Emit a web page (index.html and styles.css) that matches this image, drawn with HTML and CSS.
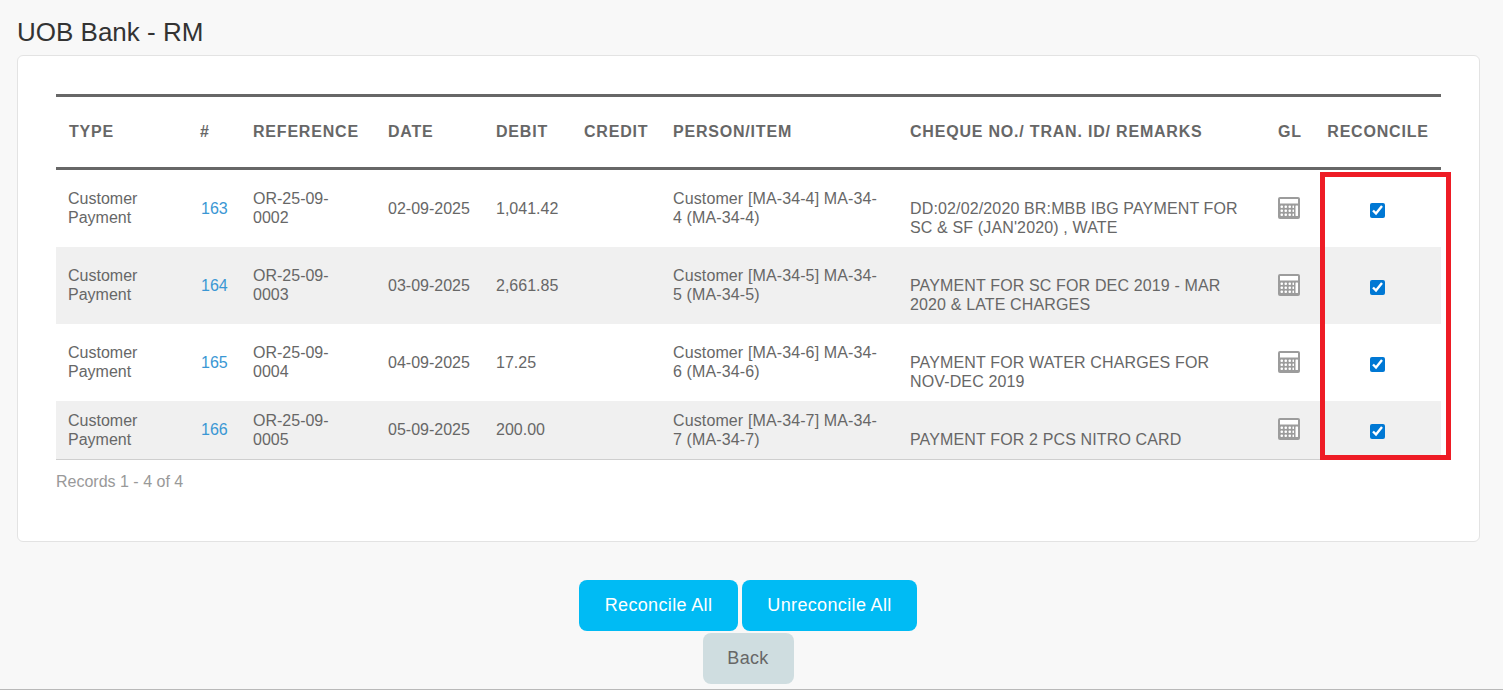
FILE: index.html
```html
<!DOCTYPE html>
<html lang="en">
<head>
<meta charset="utf-8">
<title>UOB Bank - RM</title>
<link rel="stylesheet" href="styles.css">
</head>
<body>
<svg class="sprite" width="0" height="0" aria-hidden="true">
  <symbol id="calc" viewBox="0 0 22 22">
    <rect x="0" y="0" width="22" height="22" rx="2" fill="#9c9c9c"/>
    <rect x="2" y="2" width="18" height="4.5" fill="#fff"/>
    <g fill="#fff">
      <rect x="2.5" y="8.5" width="2.5" height="2.5" rx="1"/><rect x="6.5" y="8.5" width="2.5" height="2.5" rx="1"/><rect x="10.5" y="8.5" width="2.5" height="2.5" rx="1"/><rect x="14.5" y="8.5" width="1.5" height="2.5" rx="0.5"/>
      <rect x="2.5" y="12.5" width="2.5" height="2.5" rx="1"/><rect x="6.5" y="12.5" width="2.5" height="2.5" rx="1"/><rect x="10.5" y="12.5" width="2.5" height="2.5" rx="1"/><rect x="14.5" y="12.5" width="1.5" height="2.5" rx="0.5"/>
      <rect x="2.5" y="16.5" width="2.5" height="2.5" rx="1"/><rect x="6.5" y="16.5" width="2.5" height="2.5" rx="1"/><rect x="10.5" y="16.5" width="2.5" height="2.5" rx="1"/><rect x="14.5" y="16.5" width="1.5" height="2.5" rx="0.5"/>
      <rect x="17.5" y="8.5" width="2.5" height="10.5" rx="0.5"/>
    </g>
  </symbol>
</svg>
<main class="page">
  <h1 class="title">UOB Bank - RM</h1>
  <section class="card">
    <div class="table-wrap">
      <table class="grid">
        <colgroup>
          <col class="c-type"><col class="c-num"><col class="c-ref"><col class="c-date"><col class="c-debit"><col class="c-credit"><col class="c-person"><col class="c-cheque"><col class="c-gl"><col class="c-rec">
        </colgroup>
        <thead>
          <tr><th class="first">TYPE</th><th>#</th><th>REFERENCE</th><th>DATE</th><th>DEBIT</th><th>CREDIT</th><th>PERSON/ITEM</th><th>CHEQUE NO./ TRAN. ID/ REMARKS</th><th>GL</th><th class="center">RECONCILE</th></tr>
        </thead>
        <tbody>
          <tr>
            <td>Customer Payment</td><td class="num"><a href="#" class="link">163</a></td><td>OR-25-09-0002</td><td>02-09-2025</td><td>1,041.42</td><td></td>
            <td class="person">Customer [MA-34-4] MA-34-4 (MA-34-4)</td>
            <td class="remarks"><br>DD:02/02/2020 BR:MBB IBG PAYMENT FOR SC &amp; SF (JAN'2020) , WATE</td>
            <td><svg class="calc"><use href="#calc"/></svg></td>
            <td class="center"><input type="checkbox" class="check" checked></td>
          </tr>
          <tr>
            <td>Customer Payment</td><td class="num"><a href="#" class="link">164</a></td><td>OR-25-09-0003</td><td>03-09-2025</td><td>2,661.85</td><td></td>
            <td class="person">Customer [MA-34-5] MA-34-5 (MA-34-5)</td>
            <td class="remarks"><br>PAYMENT FOR SC FOR DEC 2019 - MAR 2020 &amp; LATE CHARGES</td>
            <td><svg class="calc"><use href="#calc"/></svg></td>
            <td class="center"><input type="checkbox" class="check" checked></td>
          </tr>
          <tr>
            <td>Customer Payment</td><td class="num"><a href="#" class="link">165</a></td><td>OR-25-09-0004</td><td>04-09-2025</td><td>17.25</td><td></td>
            <td class="person">Customer [MA-34-6] MA-34-6 (MA-34-6)</td>
            <td class="remarks"><br>PAYMENT FOR WATER CHARGES FOR NOV-DEC 2019</td>
            <td><svg class="calc"><use href="#calc"/></svg></td>
            <td class="center"><input type="checkbox" class="check" checked></td>
          </tr>
          <tr>
            <td>Customer Payment</td><td class="num"><a href="#" class="link">166</a></td><td>OR-25-09-0005</td><td>05-09-2025</td><td>200.00</td><td></td>
            <td class="person">Customer [MA-34-7] MA-34-7 (MA-34-7)</td>
            <td class="remarks"><br>PAYMENT FOR 2 PCS NITRO CARD</td>
            <td><svg class="calc"><use href="#calc"/></svg></td>
            <td class="center"><input type="checkbox" class="check" checked></td>
          </tr>
        </tbody>
      </table>
      <div class="highlight"></div>
    </div>
    <p class="records">Records 1 - 4 of 4</p>
  </section>
  <div class="actions">
    <div class="action-row">
      <button class="btn btn-primary btn-reconcile">Reconcile All</button>
      <button class="btn btn-primary btn-unreconcile">Unreconcile All</button>
    </div>
    <div class="action-row">
      <button class="btn btn-back">Back</button>
    </div>
  </div>
</main>
</body>
</html>
```
FILE: styles.css
```css
* { box-sizing: border-box; }
html, body { margin: 0; height: 100%; }
body {
  background: #f8f8f8;
  font-family: "Liberation Sans", Arial, sans-serif;
  color: #676767;
  overflow: hidden;
}
.sprite { position: absolute; }
.page {
  height: 690px;
  padding: 0 23px 0 17px;
  border-bottom: 1px solid #b9b9b9;
}
.title {
  margin: 0;
  padding-top: 18px;
  height: 55px;
  font-size: 26px;
  line-height: 28px;
  font-weight: 400;
  color: #333;
}
.card {
  height: 487px;
  background: #fff;
  border: 1px solid #e3e3e3;
  border-radius: 6px;
  padding: 38px 38px 0 38px;
}
.table-wrap { position: relative; }
.grid {
  width: 1385px;
  table-layout: fixed;
  border-collapse: collapse;
  font-size: 16px;
  line-height: 19px;
}
.c-type { width: 132px; }
.c-num { width: 53px; }
.c-ref { width: 135px; }
.c-date { width: 108px; }
.c-debit { width: 88px; }
.c-credit { width: 89px; }
.c-person { width: 237px; }
.c-cheque { width: 368px; }
.c-gl { width: 49px; }
.c-rec { width: 126px; }
.grid th {
  height: 73px;
  padding: 0 12px 2px;
  text-align: left;
  font-size: 16px;
  font-weight: 700;
  letter-spacing: 0.8px;
  white-space: nowrap;
  border-top: 3px solid #676767;
  border-bottom: 3px solid #676767;
}
.grid th.first { padding-left: 13px; }
.grid td {
  padding: 10px 12px;
  vertical-align: middle;
}
.grid td.num { padding-left: 13px; }
.grid td.person { padding-right: 18px; letter-spacing: 0.12px; }
.grid td.remarks { padding-right: 22px; letter-spacing: 0.14px; }
/* two-line cells sit a pixel high in the tall rows, one-line cells in the short row */
.grid tbody tr:not(:last-child) td:nth-child(1),
.grid tbody tr:not(:last-child) td:nth-child(3),
.grid tbody tr:not(:last-child) td:nth-child(7),
.grid tbody tr:last-child td:nth-child(2),
.grid tbody tr:last-child td:nth-child(4),
.grid tbody tr:last-child td:nth-child(5) { padding-bottom: 12px; }
.grid th.center, .grid td.center { text-align: center; padding-left: 0; padding-right: 0; }
.grid tbody tr:nth-child(even) { background: #f0f0f0; }
.grid tbody tr:last-child { border-bottom: 1px solid #cfcfcf; }
.link { color: #3a97d4; text-decoration: none; }
.calc { display: block; width: 22px; height: 22px; margin-bottom: 2px; }
.check {
  display: block;
  width: 15px;
  height: 15px;
  margin: 3px auto 0;
  position: relative;
  left: -1px;
  accent-color: #0078d4;
}
.highlight {
  position: absolute;
  left: 1264px;
  top: 78px;
  width: 131px;
  height: 288px;
  border: 5px solid #ee1c25;
  pointer-events: none;
}
.records {
  margin: 12px 0 0;
  font-size: 16px;
  line-height: 19px;
  color: #999;
}
.actions {
  display: flex;
  flex-direction: column;
  align-items: center;
  gap: 2px;
  padding: 38px 1px 0 0;
}
.action-row { display: flex; gap: 4px; }
.btn {
  height: 51px;
  border: 0;
  border-radius: 8px;
  font-family: inherit;
  font-size: 18px;
  letter-spacing: 0.35px;
  cursor: pointer;
}
.btn-primary { background: #00bbf4; color: #fff; }
.btn-reconcile { width: 159px; }
.btn-unreconcile { width: 175px; }
.btn-back { width: 91px; background: #cfdde0; color: #676767; }
```
